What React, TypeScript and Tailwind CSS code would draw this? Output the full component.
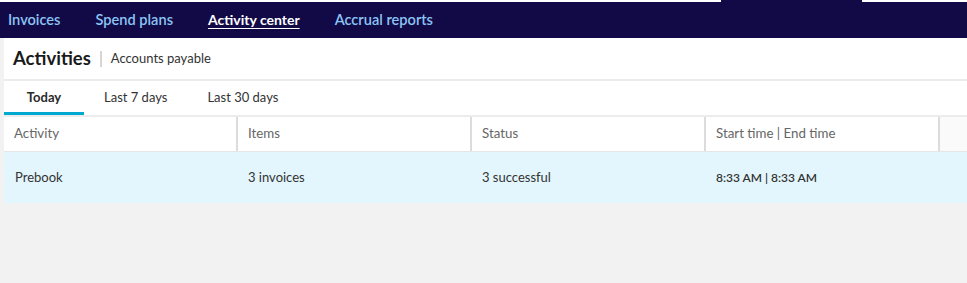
import React, { useState } from "react";

const navItems = ["Invoices", "Spend plans", "Activity center", "Accrual reports"];
const tabs = ["Today", "Last 7 days", "Last 30 days"];
const columns = ["Activity", "Items", "Status", "Start time | End time"];

const rows = [
  { activity: "Prebook", items: "3 invoices", status: "3 successful", time: "8:33 AM | 8:33 AM" },
];

const App = () => {
  const [activeTab, setActiveTab] = useState(0);

  return (
    <div
      className="w-[967px] h-[283px] bg-[#f2f2f2] overflow-hidden flex flex-col"
      style={{ fontFamily: "Lato, 'Noto Sans', sans-serif" }}
    >
      {/* top strip */}
      <div className="h-[2px] bg-white flex shrink-0">
        <div className="ml-[721px] w-[141px] h-[2px] bg-[#120a46]" />
      </div>

      {/* nav */}
      <nav className="h-[36px] bg-[#120a46] flex items-center pl-[8px] pb-[1px] gap-[35px] shrink-0">
        {navItems.map((item) => (
          <span
            key={item}
            className={
              item === "Activity center"
                ? "text-[14px] font-bold text-white underline underline-offset-[3px]"
                : "text-[14.6px] font-semibold text-[#8cc4f4]"
            }
          >
            {item}
          </span>
        ))}
      </nav>

      <div className="ml-[4px] flex flex-col">
        {/* page title */}
        <div className="h-[41px] bg-white flex items-center pl-[9px] pt-[1px]">
          <h1 className="text-[18.5px] font-bold text-[#1a1a1a]">Activities</h1>
          <span className="w-[2px] h-[16px] bg-[#d6d6d6] ml-[9px] mr-[9px]" />
          <span className="text-[13px] text-[#333]">Accounts payable</span>
        </div>
        <div className="h-[2px] bg-[#ececec]" />

        {/* tabs */}
        <div className="h-[34px] bg-white flex">
          {tabs.map((tab, i) => (
            <button
              key={tab}
              onClick={() => setActiveTab(i)}
              className={
                i === activeTab
                  ? "w-[80px] text-[13px] font-bold text-[#2a2a2a] border-b-[3px] border-[#00a9cf] pt-[3px]"
                  : "px-[20px] text-[13px] text-[#333] border-b-[3px] border-transparent pt-[3px]"
              }
            >
              {tab}
            </button>
          ))}
        </div>
        <div className="h-[2px] bg-[#ececec]" />

        {/* table */}
        <div className="flex h-[35px] bg-white border-b border-[#e6e6e6]">
          {columns.map((col) => (
            <div
              key={col}
              className="w-[234px] border-r-2 border-[#dcdcdc] flex items-center pl-[10px] text-[13.3px] text-[#666]"
            >
              {col}
            </div>
          ))}
          <div className="flex-1 bg-[#fafafa]" />
        </div>
        {rows.map((r) => (
          <div key={r.activity} className="flex h-[51px] bg-[#e3f6fd] items-center text-[13px] text-[#333]">
            <div className="w-[234px] pl-[11px]">{r.activity}</div>
            <div className="w-[234px] pl-[10px]">{r.items}</div>
            <div className="w-[234px] pl-[10px]">{r.status}</div>
            <div className="w-[234px] pl-[10px] font-semibold text-[12px]">{r.time}</div>
          </div>
        ))}
      </div>
    </div>
  );
};

export default App;
